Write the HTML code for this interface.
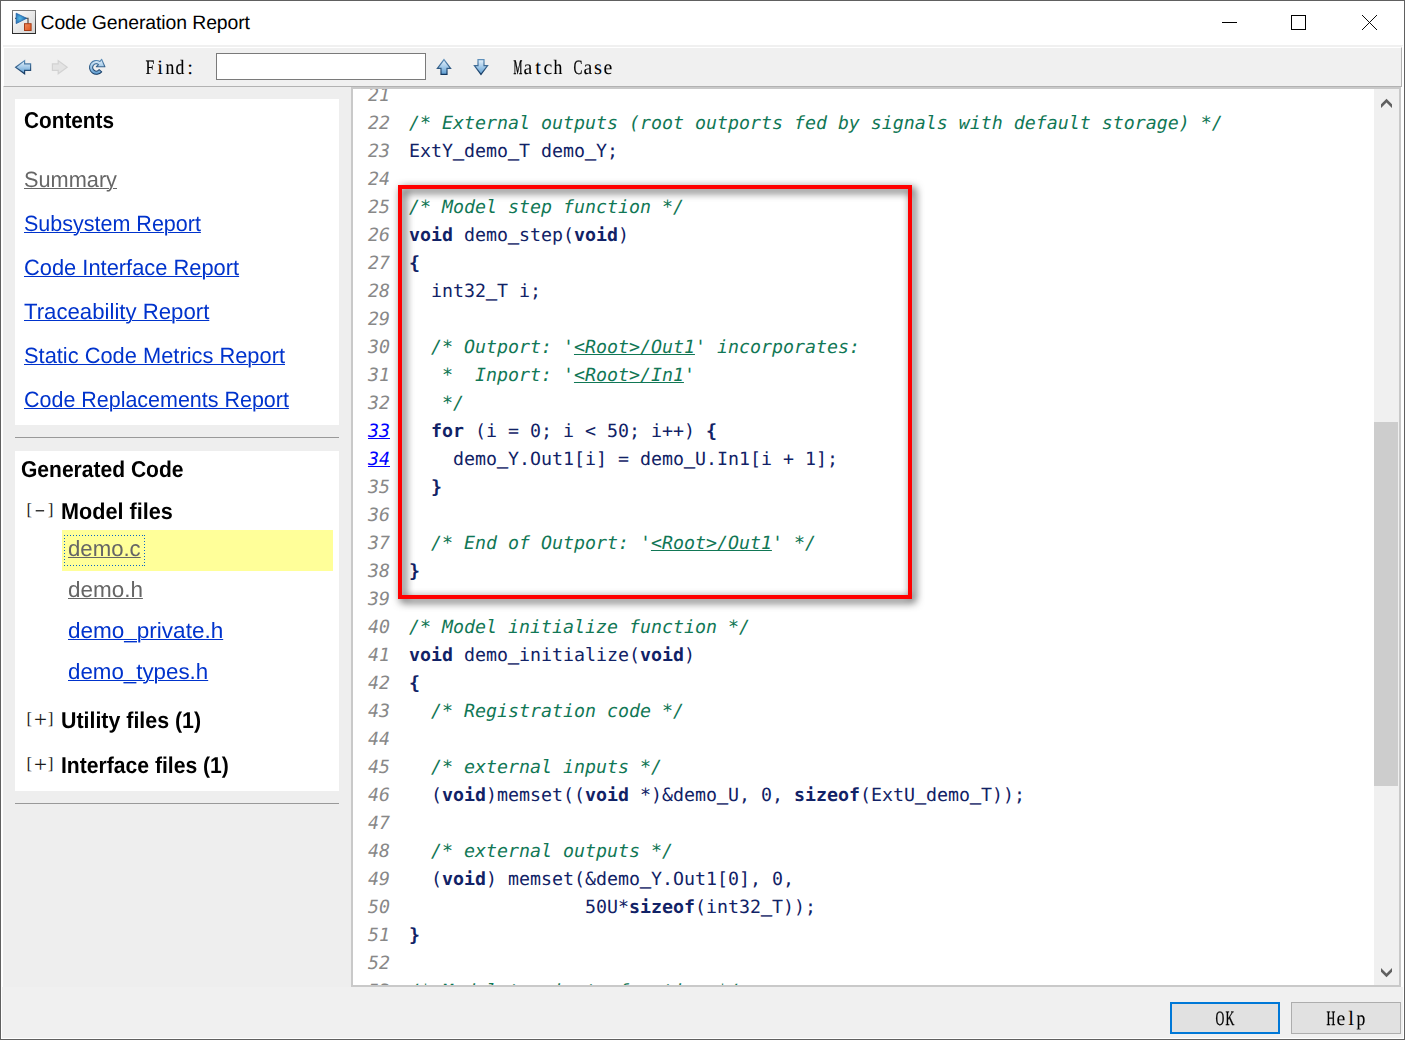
<!DOCTYPE html>
<html lang="en"><head><meta charset="utf-8"><title>Code Generation Report</title>
<style>
html,body{margin:0;padding:0}
body{text-rendering:geometricPrecision;width:1405px;height:1040px;overflow:hidden;background:#f0f0f0;position:relative}
.t{position:absolute;white-space:pre;margin:0;padding:0}
.b{position:absolute;box-sizing:border-box}
a{color:inherit}
svg{position:absolute;overflow:visible}
.c{display:inline-flex;justify-content:center;width:10px;white-space:pre}
.code{overflow:hidden;font-family:'DejaVu Sans Mono','Liberation Mono',monospace;font-size:18.271px;color:#112266}
.ln{position:absolute;left:0;white-space:pre;line-height:28px;height:28px}
.nw{display:inline-block;width:56px;padding-left:15px;box-sizing:border-box}
.n{color:#888;font-style:italic}
.nl{color:#0000ff;font-style:italic;text-decoration:underline;text-decoration-thickness:1px;text-underline-offset:1px}
.code i{color:#117755;font-style:italic}
.code b{font-weight:bold}
.code u{text-decoration:underline;text-decoration-thickness:1px;text-underline-offset:1px}
.k{-webkit-text-stroke:0.45px currentColor;position:relative;top:-1px}
.tg{position:absolute;left:0;top:0}

</style></head>
<body>
<div class="b" style="left:0px;top:0px;width:1405px;height:1040px;border:1px solid #606060;"></div>
<div class="b" style="left:1px;top:1px;width:1403px;height:1038px;border:1px solid #fff;"></div>
<div class="b" style="left:1px;top:1px;width:1403px;height:44px;background:#fff;"></div>
<div class="b" style="left:3px;top:47px;width:1399px;height:40px;border-top:1px solid #fff;border-left:1px solid #fff;border-bottom:1px solid #b2b2b2;border-right:1px solid #b2b2b2;"></div>
<div class="b" style="left:1402px;top:46px;width:2px;height:41px;background:#fff;"></div>
<div class="b" style="left:1px;top:45px;width:2px;height:942px;background:#fff;"></div>
<div class="b" style="left:1401px;top:87px;width:3px;height:900px;background:#fff;"></div>
<svg style="left:12px;top:10px" width="24" height="24" viewBox="0 0 24 24">
<defs>
<linearGradient id="ig" x1="0" y1="0" x2="1" y2="1"><stop offset="0" stop-color="#ffffff"/><stop offset="1" stop-color="#d2d2d2"/></linearGradient>
<linearGradient id="ib" x1="0" y1="0" x2="0" y2="1"><stop offset="0" stop-color="#7a7a7a"/><stop offset="1" stop-color="#2c2c2c"/></linearGradient>
<radialGradient id="it" cx="0.35" cy="0.5" r="0.6"><stop offset="0" stop-color="#56b8e6"/><stop offset="1" stop-color="#1c62a8"/></radialGradient>
<linearGradient id="io" x1="0" y1="0" x2="1" y2="1"><stop offset="0" stop-color="#ee8a5c"/><stop offset="1" stop-color="#e0551c"/></linearGradient>
</defs>
<rect x="0.5" y="0.5" width="23" height="23" fill="url(#ig)" stroke="url(#ib)" stroke-width="1"/>
<path d="M3 8.3H5 M13 8.3H16V14" fill="none" stroke="#5a5a5a" stroke-width="1.3"/>
<path d="M4.2 3.2L14.6 8.3L4.2 13.6Z" fill="url(#it)" stroke="#1c62a8" stroke-width="0.8" stroke-linejoin="round"/>
<rect x="12.5" y="13.7" width="6.6" height="6.8" fill="url(#io)" stroke="#a63c17" stroke-width="1"/>
</svg>
<div class="t" style="left:40.5px;top:10.5px;font-family:'Liberation Sans',sans-serif;font-size:19.4px;line-height:25px;color:#000;letter-spacing:-0.085px;">Code Generation Report</div>
<svg style="left:1215px;top:8px" width="170" height="30" viewBox="0 0 170 30" shape-rendering="crispEdges">
<rect x="7" y="14" width="15" height="1" fill="#000"/>
<rect x="76.5" y="7.5" width="14" height="14" fill="none" stroke="#000" stroke-width="1"/>
<path d="M147 7L162 22M162 7L147 22" stroke="#000" stroke-width="0.95" fill="none" shape-rendering="geometricPrecision"/>
</svg>
<svg style="left:0;top:0" width="1405" height="90" viewBox="0 0 1405 90">
<defs>
<linearGradient id="ab" x1="0" y1="0" x2="0" y2="1"><stop offset="0" stop-color="#e6f2fb"/><stop offset="0.45" stop-color="#a9cdea"/><stop offset="1" stop-color="#5b9bd0"/></linearGradient>
<linearGradient id="as" x1="0" y1="0" x2="0" y2="1"><stop offset="0" stop-color="#5d8fba"/><stop offset="1" stop-color="#12365e"/></linearGradient>
</defs>
<!-- back -->
<path d="M15.6 67.2L24.6 60.6V63.8H30.6V70.4H24.6V73.8Z" fill="url(#ab)" stroke="url(#as)" stroke-width="1.2" stroke-linejoin="miter"/>
<!-- forward (disabled) -->
<path d="M67.2 67.2L58.2 60.6V63.8H52.4V70.4H58.2V73.8Z" fill="#e3e3e3" stroke="#d2d2d2" stroke-width="1.2"/>
<!-- refresh -->
<path d="M100 61.5A6.9 6.9 0 1 0 101.7 71.8L99.17 69.7A3.6 3.6 0 1 1 98.6 64.6L96.3 66.75H104.9L101.6 59.2Z" fill="url(#ab)" stroke="url(#as)" stroke-width="1.1" stroke-linejoin="round"/>
<!-- up -->
<path d="M444 59.6L450.6 68.4H447V74.4H441V68.4H437.4Z" fill="url(#ab)" stroke="url(#as)" stroke-width="1.2"/>
<!-- down -->
<path d="M481 74.4L487.6 65.6H484V59.6H478V65.6H474.4Z" fill="url(#ab)" stroke="url(#as)" stroke-width="1.2"/>
</svg>
<div class="t" style="left:145px;top:54.5px;font-family:'Liberation Serif',serif;font-size:20.5px;line-height:27px;color:#000;"><span class="c" style="transform:scaleX(0.773);-webkit-text-stroke:0.20px currentColor">F</span><span class="c">i</span><span class="c" style="transform:scaleX(0.859);-webkit-text-stroke:0.13px currentColor">n</span><span class="c" style="transform:scaleX(0.859);-webkit-text-stroke:0.13px currentColor">d</span><span class="c">:</span></div>
<div class="b" style="left:216px;top:53px;width:210px;height:27px;background:#fff;border:1px solid #7a7a7a;"></div>
<div class="t" style="left:513px;top:54.5px;font-family:'Liberation Serif',serif;font-size:20.5px;line-height:27px;color:#000;"><span class="c" style="transform:scaleX(0.482);-webkit-text-stroke:0.47px currentColor">M</span><span class="c" style="transform:scaleX(0.965);-webkit-text-stroke:0.03px currentColor">a</span><span class="c">t</span><span class="c" style="transform:scaleX(0.965);-webkit-text-stroke:0.03px currentColor">c</span><span class="c" style="transform:scaleX(0.859);-webkit-text-stroke:0.13px currentColor">h</span><span class="c"> </span><span class="c" style="transform:scaleX(0.646);-webkit-text-stroke:0.32px currentColor">C</span><span class="c" style="transform:scaleX(0.965);-webkit-text-stroke:0.03px currentColor">a</span><span class="c">s</span><span class="c" style="transform:scaleX(0.965);-webkit-text-stroke:0.03px currentColor">e</span></div>
<div class="b" style="left:3px;top:87px;width:348px;height:900px;background:#eeeeee;"></div>
<div class="b" style="left:15px;top:99px;width:324px;height:326px;background:#fff;"></div>
<div class="b" style="left:15px;top:437px;width:324px;height:1px;background:#999;"></div>
<div class="b" style="left:15px;top:451px;width:324px;height:340px;background:#fff;"></div>
<div class="b" style="left:15px;top:803px;width:324px;height:1px;background:#999;"></div>
<div class="t" style="left:23.8926px;top:105px;font-family:'Liberation Sans',sans-serif;font-size:22.9px;line-height:30px;color:#000;font-weight:bold;transform:scaleX(0.9074);transform-origin:0 0;">Contents</div>
<div class="t" style="left:23.9px;top:165px;font-family:'Liberation Sans',sans-serif;font-size:22.1px;line-height:29px;color:#666666;transform:scaleX(0.9838);transform-origin:0 0;"><a style="text-decoration:underline;text-decoration-thickness:1px;text-underline-offset:0.5px;">Summary</a></div>
<div class="t" style="left:23.9px;top:209px;font-family:'Liberation Sans',sans-serif;font-size:22.1px;line-height:29px;color:#0033cc;transform:scaleX(0.9734);transform-origin:0 0;"><a style="text-decoration:underline;text-decoration-thickness:1px;text-underline-offset:0.5px;">Subsystem Report</a></div>
<div class="t" style="left:23.9px;top:253px;font-family:'Liberation Sans',sans-serif;font-size:22.1px;line-height:29px;color:#0033cc;transform:scaleX(0.9895);transform-origin:0 0;"><a style="text-decoration:underline;text-decoration-thickness:1px;text-underline-offset:0.5px;">Code Interface Report</a></div>
<div class="t" style="left:23.8px;top:297px;font-family:'Liberation Sans',sans-serif;font-size:22.1px;line-height:29px;color:#0033cc;transform:scaleX(1.0038);transform-origin:0 0;"><a style="text-decoration:underline;text-decoration-thickness:1px;text-underline-offset:0.5px;">Traceability Report</a></div>
<div class="t" style="left:23.9px;top:341px;font-family:'Liberation Sans',sans-serif;font-size:22.1px;line-height:29px;color:#0033cc;transform:scaleX(0.9886);transform-origin:0 0;"><a style="text-decoration:underline;text-decoration-thickness:1px;text-underline-offset:0.5px;">Static Code Metrics Report</a></div>
<div class="t" style="left:23.9px;top:385px;font-family:'Liberation Sans',sans-serif;font-size:22.1px;line-height:29px;color:#0033cc;transform:scaleX(0.9716);transform-origin:0 0;"><a style="text-decoration:underline;text-decoration-thickness:1px;text-underline-offset:0.5px;">Code Replacements Report</a></div>
<div class="t" style="left:20.6809px;top:454px;font-family:'Liberation Sans',sans-serif;font-size:22.9px;line-height:30px;color:#000;font-weight:bold;transform:scaleX(0.9191);transform-origin:0 0;">Generated Code</div>
<div class="tg"><div class="t" style="left:23.3px;top:494.7px;font-family:'Liberation Serif',serif;font-size:17px;line-height:30px;color:#1a1a1a;width:12px;text-align:center;">[</div><div class="t" style="left:34px;top:493.7px;font-family:'Liberation Serif',serif;font-size:18px;line-height:30px;color:#1a1a1a;width:12px;text-align:center;transform:scaleX(1.8);">-</div><div class="t" style="left:44.7px;top:494.7px;font-family:'Liberation Serif',serif;font-size:17px;line-height:30px;color:#1a1a1a;width:12px;text-align:center;">]</div></div>
<div class="t" style="left:61.0836px;top:496px;font-family:'Liberation Sans',sans-serif;font-size:22.9px;line-height:30px;color:#000;font-weight:bold;transform:scaleX(0.9442);transform-origin:0 0;">Model files</div>
<div class="b" style="left:62px;top:530px;width:271px;height:41px;background:#ffff99;"></div>
<div class="t" style="left:67.9px;top:534px;font-family:'Liberation Sans',sans-serif;font-size:22.1px;line-height:29px;color:#666666;transform:scaleX(1.0034);transform-origin:0 0;"><a style="text-decoration:underline;text-decoration-thickness:1px;text-underline-offset:0.5px;">demo.c</a></div>
<div class="t" style="left:67.9px;top:575px;font-family:'Liberation Sans',sans-serif;font-size:22.1px;line-height:29px;color:#666666;transform:scaleX(1.0162);transform-origin:0 0;"><a style="text-decoration:underline;text-decoration-thickness:1px;text-underline-offset:0.5px;">demo.h</a></div>
<div class="t" style="left:67.9px;top:616px;font-family:'Liberation Sans',sans-serif;font-size:22.1px;line-height:29px;color:#0033cc;transform:scaleX(1.0191);transform-origin:0 0;"><a style="text-decoration:underline;text-decoration-thickness:1px;text-underline-offset:0.5px;">demo_private.h</a></div>
<div class="t" style="left:67.9px;top:657px;font-family:'Liberation Sans',sans-serif;font-size:22.1px;line-height:29px;color:#0033cc;transform:scaleX(1.0101);transform-origin:0 0;"><a style="text-decoration:underline;text-decoration-thickness:1px;text-underline-offset:0.5px;">demo_types.h</a></div>
<div class="tg"><div class="t" style="left:23.3px;top:703.7px;font-family:'Liberation Serif',serif;font-size:17px;line-height:30px;color:#1a1a1a;width:12px;text-align:center;">[</div><div class="t" style="left:34px;top:704.6px;font-family:'Liberation Serif',serif;font-size:23px;line-height:30px;color:#1a1a1a;width:12px;text-align:center;">+</div><div class="t" style="left:44.7px;top:703.7px;font-family:'Liberation Serif',serif;font-size:17px;line-height:30px;color:#1a1a1a;width:12px;text-align:center;">]</div></div>
<div class="t" style="left:61.4266px;top:705px;font-family:'Liberation Sans',sans-serif;font-size:22.9px;line-height:30px;color:#000;font-weight:bold;transform:scaleX(0.9335);transform-origin:0 0;">Utility files (1)</div>
<div class="tg"><div class="t" style="left:23.3px;top:748.7px;font-family:'Liberation Serif',serif;font-size:17px;line-height:30px;color:#1a1a1a;width:12px;text-align:center;">[</div><div class="t" style="left:34px;top:749.6px;font-family:'Liberation Serif',serif;font-size:23px;line-height:30px;color:#1a1a1a;width:12px;text-align:center;">+</div><div class="t" style="left:44.7px;top:748.7px;font-family:'Liberation Serif',serif;font-size:17px;line-height:30px;color:#1a1a1a;width:12px;text-align:center;">]</div></div>
<div class="t" style="left:61.4308px;top:750px;font-family:'Liberation Sans',sans-serif;font-size:22.9px;line-height:30px;color:#000;font-weight:bold;transform:scaleX(0.9230);transform-origin:0 0;">Interface files (1)</div>
<div class="b" style="left:64px;top:535px;width:81px;height:31px;background:repeating-linear-gradient(90deg,#0a66c8 0 1px,transparent 1px 3px) 0 0/100% 1px no-repeat,repeating-linear-gradient(90deg,#0a66c8 0 1px,transparent 1px 3px) 0 100%/100% 1px no-repeat,repeating-linear-gradient(180deg,#0a66c8 0 1px,transparent 1px 3px) 0 0/1px 100% no-repeat,repeating-linear-gradient(180deg,#0a66c8 0 1px,transparent 1px 3px) 100% 0/1px 100% no-repeat;"></div>
<div class="b" style="left:351px;top:87px;width:1050px;height:900px;background:#fff;border:2px solid #c9c9c9;"></div>
<div class="b" style="left:1374px;top:89px;width:25px;height:896px;background:#f0f0f0;"></div>
<div class="b" style="left:1374px;top:422px;width:24px;height:364px;background:#cdcdcd;"></div>
<svg style="left:1374px;top:89px" width="25" height="896" viewBox="0 0 25 896">
<path d="M7 15.3L12.5 9.8L18 15.3V19L12.5 13.5L7 19Z" fill="#606060"/>
<path d="M7 879L12.5 884.5L18 879V882.7L12.5 888.2L7 882.7Z" fill="#606060"/>
</svg>
<div class="b code" style="left:353px;top:89px;width:1021px;height:896px"><div class="ln" style="top:-7.5px"><span class="nw"><span class="n">21</span> </span></div>
<div class="ln" style="top:20.5px"><span class="nw"><span class="n">22</span> </span><i>/* External outputs (root outports fed by signals with default storage) */</i></div>
<div class="ln" style="top:48.5px"><span class="nw"><span class="n">23</span> </span>ExtY<span class="k">_</span>demo<span class="k">_</span>T demo<span class="k">_</span>Y;</div>
<div class="ln" style="top:76.5px"><span class="nw"><span class="n">24</span> </span></div>
<div class="ln" style="top:104.5px"><span class="nw"><span class="n">25</span> </span><i>/* Model step function */</i></div>
<div class="ln" style="top:132.5px"><span class="nw"><span class="n">26</span> </span><b>void</b> demo<span class="k">_</span>step(<b>void</b>)</div>
<div class="ln" style="top:160.5px"><span class="nw"><span class="n">27</span> </span><b>{</b></div>
<div class="ln" style="top:188.5px"><span class="nw"><span class="n">28</span> </span>  int32<span class="k">_</span>T i;</div>
<div class="ln" style="top:216.5px"><span class="nw"><span class="n">29</span> </span></div>
<div class="ln" style="top:244.5px"><span class="nw"><span class="n">30</span> </span>  <i>/* Outport: '<u>&lt;Root&gt;/Out1</u>' incorporates:</i></div>
<div class="ln" style="top:272.5px"><span class="nw"><span class="n">31</span> </span><i>   *  Inport: '<u>&lt;Root&gt;/In1</u>'</i></div>
<div class="ln" style="top:300.5px"><span class="nw"><span class="n">32</span> </span><i>   */</i></div>
<div class="ln" style="top:328.5px"><span class="nw"><a class="nl">33</a> </span>  <b>for</b> (i = 0; i &lt; 50; i++) <b>{</b></div>
<div class="ln" style="top:356.5px"><span class="nw"><a class="nl">34</a> </span>    demo<span class="k">_</span>Y.Out1[i] = demo<span class="k">_</span>U.In1[i + 1];</div>
<div class="ln" style="top:384.5px"><span class="nw"><span class="n">35</span> </span>  <b>}</b></div>
<div class="ln" style="top:412.5px"><span class="nw"><span class="n">36</span> </span></div>
<div class="ln" style="top:440.5px"><span class="nw"><span class="n">37</span> </span>  <i>/* End of Outport: '<u>&lt;Root&gt;/Out1</u>' */</i></div>
<div class="ln" style="top:468.5px"><span class="nw"><span class="n">38</span> </span><b>}</b></div>
<div class="ln" style="top:496.5px"><span class="nw"><span class="n">39</span> </span></div>
<div class="ln" style="top:524.5px"><span class="nw"><span class="n">40</span> </span><i>/* Model initialize function */</i></div>
<div class="ln" style="top:552.5px"><span class="nw"><span class="n">41</span> </span><b>void</b> demo<span class="k">_</span>initialize(<b>void</b>)</div>
<div class="ln" style="top:580.5px"><span class="nw"><span class="n">42</span> </span><b>{</b></div>
<div class="ln" style="top:608.5px"><span class="nw"><span class="n">43</span> </span>  <i>/* Registration code */</i></div>
<div class="ln" style="top:636.5px"><span class="nw"><span class="n">44</span> </span></div>
<div class="ln" style="top:664.5px"><span class="nw"><span class="n">45</span> </span>  <i>/* external inputs */</i></div>
<div class="ln" style="top:692.5px"><span class="nw"><span class="n">46</span> </span>  (<b>void</b>)memset((<b>void</b> *)&amp;demo<span class="k">_</span>U, 0, <b>sizeof</b>(ExtU<span class="k">_</span>demo<span class="k">_</span>T));</div>
<div class="ln" style="top:720.5px"><span class="nw"><span class="n">47</span> </span></div>
<div class="ln" style="top:748.5px"><span class="nw"><span class="n">48</span> </span>  <i>/* external outputs */</i></div>
<div class="ln" style="top:776.5px"><span class="nw"><span class="n">49</span> </span>  (<b>void</b>) memset(&amp;demo<span class="k">_</span>Y.Out1[0], 0,</div>
<div class="ln" style="top:804.5px"><span class="nw"><span class="n">50</span> </span>                50U*<b>sizeof</b>(int32<span class="k">_</span>T));</div>
<div class="ln" style="top:832.5px"><span class="nw"><span class="n">51</span> </span><b>}</b></div>
<div class="ln" style="top:860.5px"><span class="nw"><span class="n">52</span> </span></div>
<div class="ln" style="top:888.5px"><span class="nw"><span class="n">53</span> </span><i>/* Model terminate function */</i></div></div>
<div class="b" style="left:398px;top:185px;width:514px;height:414px;border:4px solid #ff0000;filter:drop-shadow(3px 3px 4px rgba(0,0,0,0.85));"></div>
<div class="b" style="left:1170px;top:1002px;width:110px;height:32px;background:#e1e1e1;border:2px solid #0078d7;"></div>
<div class="b" style="left:1291px;top:1002px;width:110px;height:32px;background:#e1e1e1;border:1px solid #adadad;"></div>
<div class="t" style="left:1215px;top:1005.5px;font-family:'Liberation Serif',serif;font-size:20.5px;line-height:27px;color:#000;"><span class="c" style="transform:scaleX(0.596);-webkit-text-stroke:0.36px currentColor">O</span><span class="c" style="transform:scaleX(0.596);-webkit-text-stroke:0.36px currentColor">K</span></div>
<div class="t" style="left:1326px;top:1005.5px;font-family:'Liberation Serif',serif;font-size:20.5px;line-height:27px;color:#000;"><span class="c" style="transform:scaleX(0.596);-webkit-text-stroke:0.36px currentColor">H</span><span class="c" style="transform:scaleX(0.965);-webkit-text-stroke:0.03px currentColor">e</span><span class="c">l</span><span class="c" style="transform:scaleX(0.859);-webkit-text-stroke:0.13px currentColor">p</span></div>
</body></html>
